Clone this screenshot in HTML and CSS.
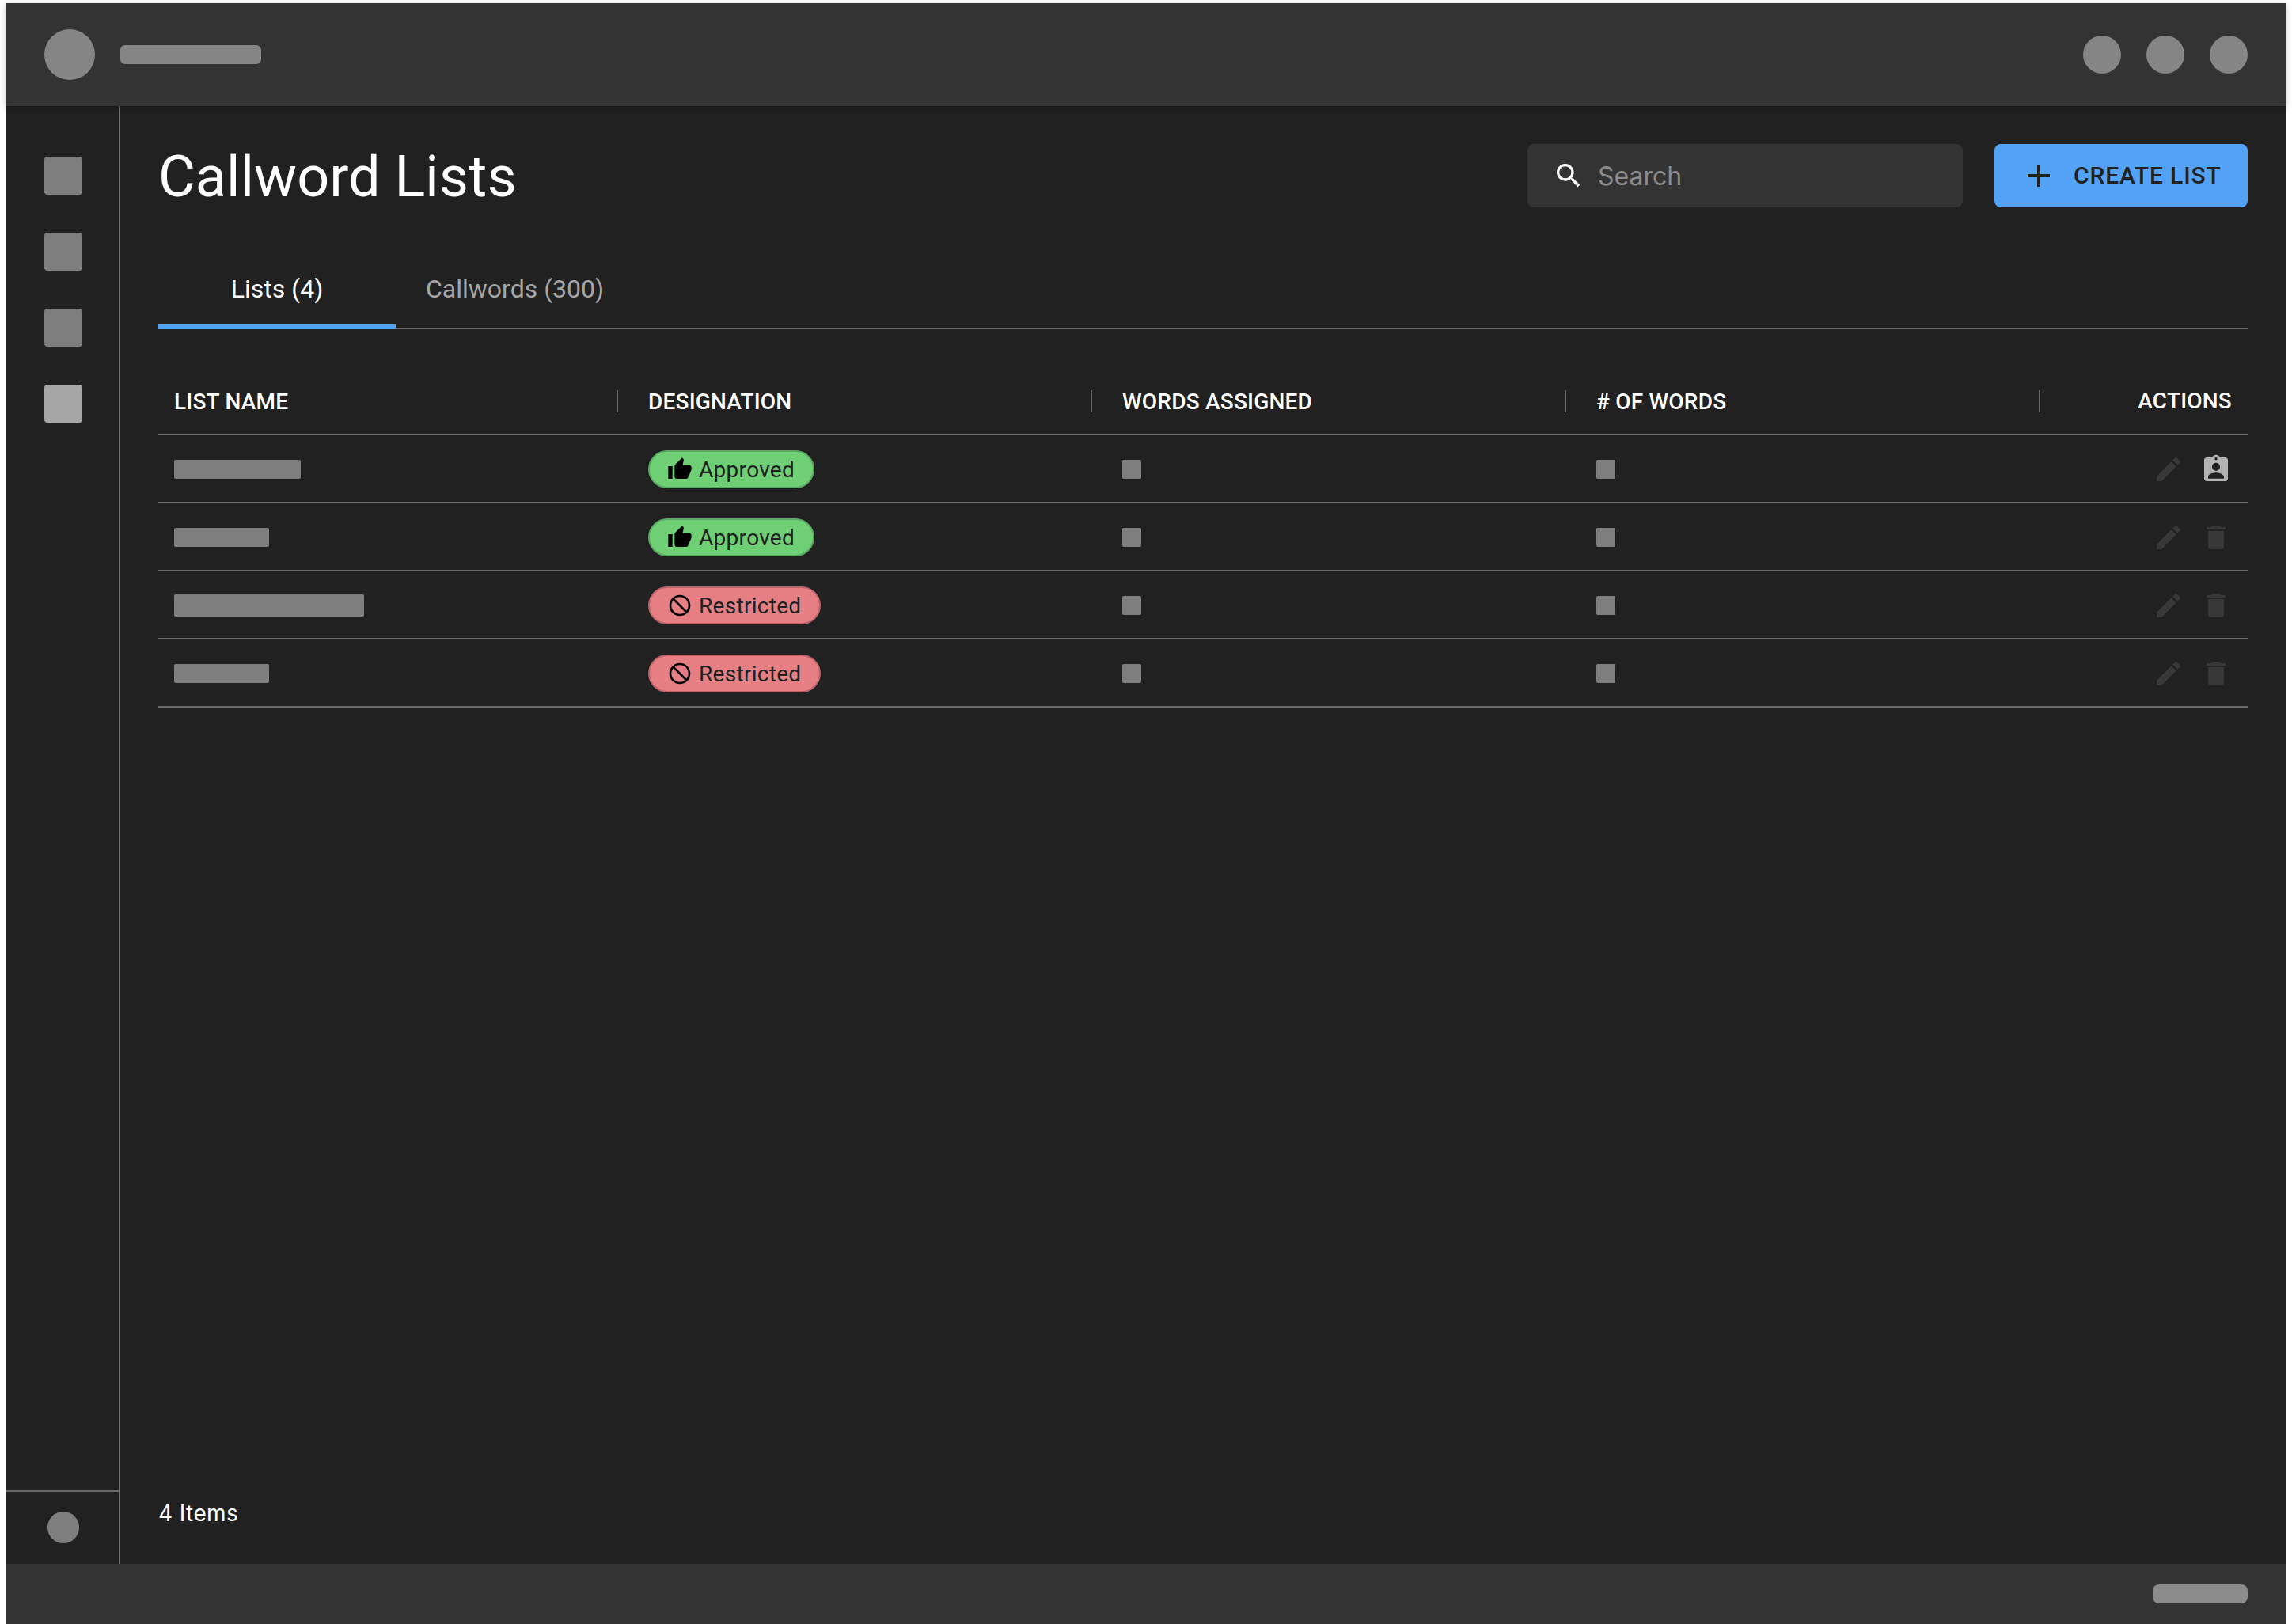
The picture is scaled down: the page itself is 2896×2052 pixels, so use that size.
FILE: index.html
```html
<!DOCTYPE html>
<html lang="en">
<head>
    <meta charset="UTF-8">
    <title>Callword Lists</title>
    <link rel="stylesheet" href="styles.css">
</head>
<body>
    <svg class="icon-defs" aria-hidden="true">
        <symbol id="i-search" viewBox="0 0 24 24"><path d="M15.5 14h-.79l-.28-.27C15.41 12.59 16 11.11 16 9.5 16 5.91 13.09 3 9.5 3S3 5.91 3 9.5 5.91 16 9.5 16c1.61 0 3.09-.59 4.23-1.57l.27.28v.79l5 4.99L20.49 19l-4.99-5zm-6 0C7.01 14 5 11.99 5 9.5S7.01 5 9.5 5 14 7.01 14 9.5 11.99 14 9.5 14z"/></symbol>
        <symbol id="i-add" viewBox="0 0 24 24"><path d="M19 13h-6v6h-2v-6H5v-2h6V5h2v6h6v2z"/></symbol>
        <symbol id="i-thumb" viewBox="0 0 24 24"><path d="M1 21h4V9H1v12zm22-11c0-1.1-.9-2-2-2h-6.31l.95-4.57.03-.32c0-.41-.17-.79-.44-1.06L14.17 1 7.59 7.59C7.22 7.95 7 8.45 7 9v10c0 1.1.9 2 2 2h9c.83 0 1.54-.5 1.84-1.22l3.02-7.05c.09-.23.14-.47.14-.73v-2z"/></symbol>
        <symbol id="i-block" viewBox="0 0 24 24"><path transform="matrix(-1 0 0 1 24 0)" d="M12 2C6.48 2 2 6.48 2 12s4.48 10 10 10 10-4.48 10-10S17.52 2 12 2zM4 12c0-4.42 3.58-8 8-8 1.85 0 3.55.63 4.9 1.69L5.69 16.9C4.63 15.55 4 13.85 4 12zm8 8c-1.85 0-3.55-.63-4.9-1.69L18.31 7.1C19.37 8.45 20 10.15 20 12c0 4.42-3.58 8-8 8z"/></symbol>
        <symbol id="i-edit" viewBox="0 0 24 24"><path d="M3 17.25V21h3.75L17.81 9.94l-3.75-3.75L3 17.25zM20.71 7.04c.39-.39.39-1.02 0-1.41l-2.34-2.34c-.39-.39-1.02-.39-1.41 0l-1.83 1.83 3.75 3.75 1.83-1.83z"/></symbol>
        <symbol id="i-assign" viewBox="0 0 24 24"><path d="M19 3h-4.18C14.4 1.84 13.3 1 12 1c-1.3 0-2.4.84-2.82 2H5c-1.1 0-2 .9-2 2v14c0 1.1.9 2 2 2h14c1.1 0 2-.9 2-2V5c0-1.1-.9-2-2-2zm-7 0c.55 0 1 .45 1 1s-.45 1-1 1-1-.45-1-1 .45-1 1-1zm0 4c1.66 0 3 1.34 3 3s-1.34 3-3 3-3-1.34-3-3 1.34-3 3-3zm6 12H6v-1.4c0-2 4-3.1 6-3.1s6 1.1 6 3.1V19z"/></symbol>
        <symbol id="i-delete" viewBox="0 0 24 24"><path d="M6 19c0 1.1.9 2 2 2h8c1.1 0 2-.9 2-2V7H6v12zM19 4h-3.5l-1-1h-5l-1 1H5v2h14V4z"/></symbol>
    </svg>

    <div class="app">
        <header class="topbar">
            <div class="topbar-left">
                <div class="avatar"></div>
                <div class="pill"></div>
            </div>
            <div class="topbar-right">
                <div class="dot"></div>
                <div class="dot"></div>
                <div class="dot"></div>
            </div>
        </header>

        <div class="middle">
            <nav class="sidebar">
                <div class="side-items">
                    <div class="side-item"></div>
                    <div class="side-item"></div>
                    <div class="side-item"></div>
                    <div class="side-item active"></div>
                </div>
                <div class="side-footer">
                    <div class="side-dot"></div>
                </div>
            </nav>

            <main class="content">
                <div class="page-head">
                    <h1>Callword Lists</h1>
                    <div class="page-tools">
                        <div class="search-box">
                            <svg class="search-icon"><use href="#i-search"/></svg>
                            <span>Search</span>
                        </div>
                        <button class="create-button">
                            <svg class="add-icon"><use href="#i-add"/></svg>
                            <span>CREATE LIST</span>
                        </button>
                    </div>
                </div>

                <div class="tabs">
                    <div class="tab active">Lists (4)</div>
                    <div class="tab">Callwords (300)</div>
                </div>

                <div class="list-table">
                    <div class="table-row table-head">
                        <div class="head-cell">LIST NAME</div>
                        <div class="head-cell">DESIGNATION</div>
                        <div class="head-cell">WORDS ASSIGNED</div>
                        <div class="head-cell"># OF WORDS</div>
                        <div class="head-actions">ACTIONS</div>
                    </div>

                    <div class="table-row">
                        <div class="cell"><div class="name-bar w160"></div></div>
                        <div class="cell">
                            <span class="badge approved"><svg><use href="#i-thumb"/></svg>Approved</span>
                        </div>
                        <div class="cell"><div class="num-bar"></div></div>
                        <div class="cell"><div class="num-bar"></div></div>
                        <div class="cell actions">
                            <svg class="action-off"><use href="#i-edit"/></svg>
                            <svg class="action-on"><use href="#i-assign"/></svg>
                        </div>
                    </div>

                    <div class="table-row">
                        <div class="cell"><div class="name-bar w120"></div></div>
                        <div class="cell">
                            <span class="badge approved"><svg><use href="#i-thumb"/></svg>Approved</span>
                        </div>
                        <div class="cell"><div class="num-bar"></div></div>
                        <div class="cell"><div class="num-bar"></div></div>
                        <div class="cell actions">
                            <svg class="action-off"><use href="#i-edit"/></svg>
                            <svg class="action-off"><use href="#i-delete"/></svg>
                        </div>
                    </div>

                    <div class="table-row">
                        <div class="cell"><div class="name-bar w240"></div></div>
                        <div class="cell">
                            <span class="badge restricted"><svg><use href="#i-block"/></svg>Restricted</span>
                        </div>
                        <div class="cell"><div class="num-bar"></div></div>
                        <div class="cell"><div class="num-bar"></div></div>
                        <div class="cell actions">
                            <svg class="action-off"><use href="#i-edit"/></svg>
                            <svg class="action-off"><use href="#i-delete"/></svg>
                        </div>
                    </div>

                    <div class="table-row">
                        <div class="cell"><div class="name-bar w120"></div></div>
                        <div class="cell">
                            <span class="badge restricted"><svg><use href="#i-block"/></svg>Restricted</span>
                        </div>
                        <div class="cell"><div class="num-bar"></div></div>
                        <div class="cell"><div class="num-bar"></div></div>
                        <div class="cell actions">
                            <svg class="action-off"><use href="#i-edit"/></svg>
                            <svg class="action-off"><use href="#i-delete"/></svg>
                        </div>
                    </div>
                </div>

                <div class="item-count">4 Items</div>
            </main>
        </div>

        <footer class="bottombar">
            <div class="bottom-pill"></div>
        </footer>
    </div>
</body>
</html>
```

FILE: styles.css
```css
* {
    box-sizing: border-box;
}
body {
    font-family: Roboto, 'Liberation Sans', sans-serif;
    margin: 0;
    padding: 4px 8px 0;
    background-color: #fff;
    color: #fff;
}
.icon-defs {
    display: none;
}
.app {
    height: 2048px;
    display: flex;
    flex-direction: column;
    background-color: #212121;
}
.topbar {
    height: 130px;
    flex: none;
    display: flex;
    justify-content: space-between;
    align-items: center;
    padding: 0 48px;
    background-color: #333;
    box-shadow: 0 2px 8px rgba(0,0,0,0.25);
}
.topbar-left {
    display: flex;
    align-items: center;
    gap: 32px;
}
.topbar-right {
    display: flex;
    gap: 32px;
}
.avatar {
    width: 64px;
    height: 64px;
    border-radius: 50%;
    background-color: #858585;
}
.pill {
    width: 178px;
    height: 24px;
    border-radius: 6px;
    background-color: #858585;
}
.dot {
    width: 48px;
    height: 48px;
    border-radius: 50%;
    background-color: #858585;
}
.middle {
    flex: 1;
    display: flex;
    min-height: 0;
}
.sidebar {
    width: 144px;
    flex: none;
    display: flex;
    flex-direction: column;
    justify-content: space-between;
    border-right: 2px solid #6b6b6b;
}
.side-items {
    display: flex;
    flex-direction: column;
    gap: 48px;
    padding: 64px 48px 0;
}
.side-item {
    width: 48px;
    height: 48px;
    border-radius: 4px;
    background-color: #7e7e7e;
}
.side-item.active {
    background-color: #a6a6a6;
}
.side-footer {
    height: 93px;
    padding: 25px 52px 0;
    border-top: 2px solid #6b6b6b;
}
.side-dot {
    width: 40px;
    height: 40px;
    border-radius: 50%;
    background-color: #7e7e7e;
}
.content {
    flex: 1;
    display: flex;
    flex-direction: column;
    padding: 48px 48px 48px;
}
.page-head {
    display: flex;
    justify-content: space-between;
    align-items: center;
    height: 80px;
}
h1 {
    margin: 0;
    padding-top: 3px;
    font-size: 72px;
    font-weight: 400;
    line-height: 80px;
}
.page-tools {
    display: flex;
    gap: 40px;
}
.search-box {
    width: 550px;
    height: 80px;
    display: flex;
    align-items: center;
    gap: 17px;
    padding-left: 32px;
    border-radius: 8px;
    background-color: #333;
    color: #8c8c8c;
    font-family: Inter, Roboto, sans-serif;
    font-size: 32px;
}
.search-icon {
    width: 40px;
    height: 40px;
    fill: #fff;
}
.create-button {
    width: 320px;
    height: 80px;
    display: flex;
    align-items: center;
    gap: 20px;
    padding: 0 0 2px 32px;
    border: none;
    border-radius: 8px;
    background-color: #52a3f5;
    color: #212121;
    font-family: inherit;
    font-size: 30px;
    font-weight: 500;
    letter-spacing: 0.85px;
}
.add-icon {
    width: 48px;
    height: 48px;
    margin-top: 2px;
    fill: #212121;
}
.tabs {
    display: flex;
    height: 102px;
    margin-top: 52px;
    border-bottom: 2px solid #6b6b6b;
}
.tab {
    height: 102px;
    padding: 32px 38px 0;
    font-size: 32px;
    color: #a6a6a6;
}
.tab.active {
    width: 300px;
    padding: 32px 0 0;
    text-align: center;
    color: #fff;
    border-bottom: 6px solid #52a3f5;
}
.list-table {
    flex: 1;
    margin-top: 48px;
}
.table-row {
    display: grid;
    grid-template-columns: repeat(4, 599px) 1fr;
    align-items: center;
    height: 86px;
    padding-top: 2px;
    border-bottom: 2px solid #6b6b6b;
}
.head-cell {
    height: 28px;
    line-height: 30px;
    margin-right: 18px;
    padding-left: 20px;
    border-right: 2px solid #6b6b6b;
    font-size: 28px;
    font-weight: 500;
    letter-spacing: 0.2px;
}
.head-actions {
    padding-right: 20px;
    text-align: right;
    line-height: 30px;
    font-size: 28px;
    font-weight: 500;
    letter-spacing: 0.2px;
}
.cell {
    padding-left: 20px;
}
.name-bar {
    height: 24px;
    border-radius: 2px;
    background-color: #7e7e7e;
}
.w120 { width: 120px; }
.w160 { width: 160px; }
.w240 { width: 240px; height: 28px; }
.num-bar {
    width: 24px;
    height: 24px;
    border-radius: 2px;
    background-color: #7e7e7e;
}
.badge {
    display: inline-flex;
    align-items: center;
    gap: 8px;
    height: 48px;
    padding: 0 23px 0 22px;
    border: 2px solid;
    border-radius: 24px;
    color: #212121;
    font-size: 28px;
    letter-spacing: 0.3px;
    vertical-align: top;
}
.badge svg {
    width: 32px;
    height: 32px;
    fill: #000;
}
.badge.approved {
    background-color: #6fcf75;
    border-color: #5ba862;
}
.badge.restricted {
    background-color: #e57f83;
    border-color: #b9666a;
}
.actions {
    display: flex;
    justify-content: flex-end;
    gap: 20px;
    padding: 0 20px 0 0;
}
.actions svg {
    width: 40px;
    height: 40px;
}
.action-off {
    fill: #383838;
}
.action-on {
    fill: #b3b3b3;
}
.item-count {
    font-family: Inter, Roboto, sans-serif;
    font-size: 28px;
    line-height: 32px;
    letter-spacing: 0.4px;
}
.bottombar {
    height: 76px;
    flex: none;
    display: flex;
    justify-content: flex-end;
    align-items: center;
    padding: 0 48px;
    background-color: #333;
}
.bottom-pill {
    width: 120px;
    height: 24px;
    border-radius: 8px;
    background-color: #8c8c8c;
}
```
